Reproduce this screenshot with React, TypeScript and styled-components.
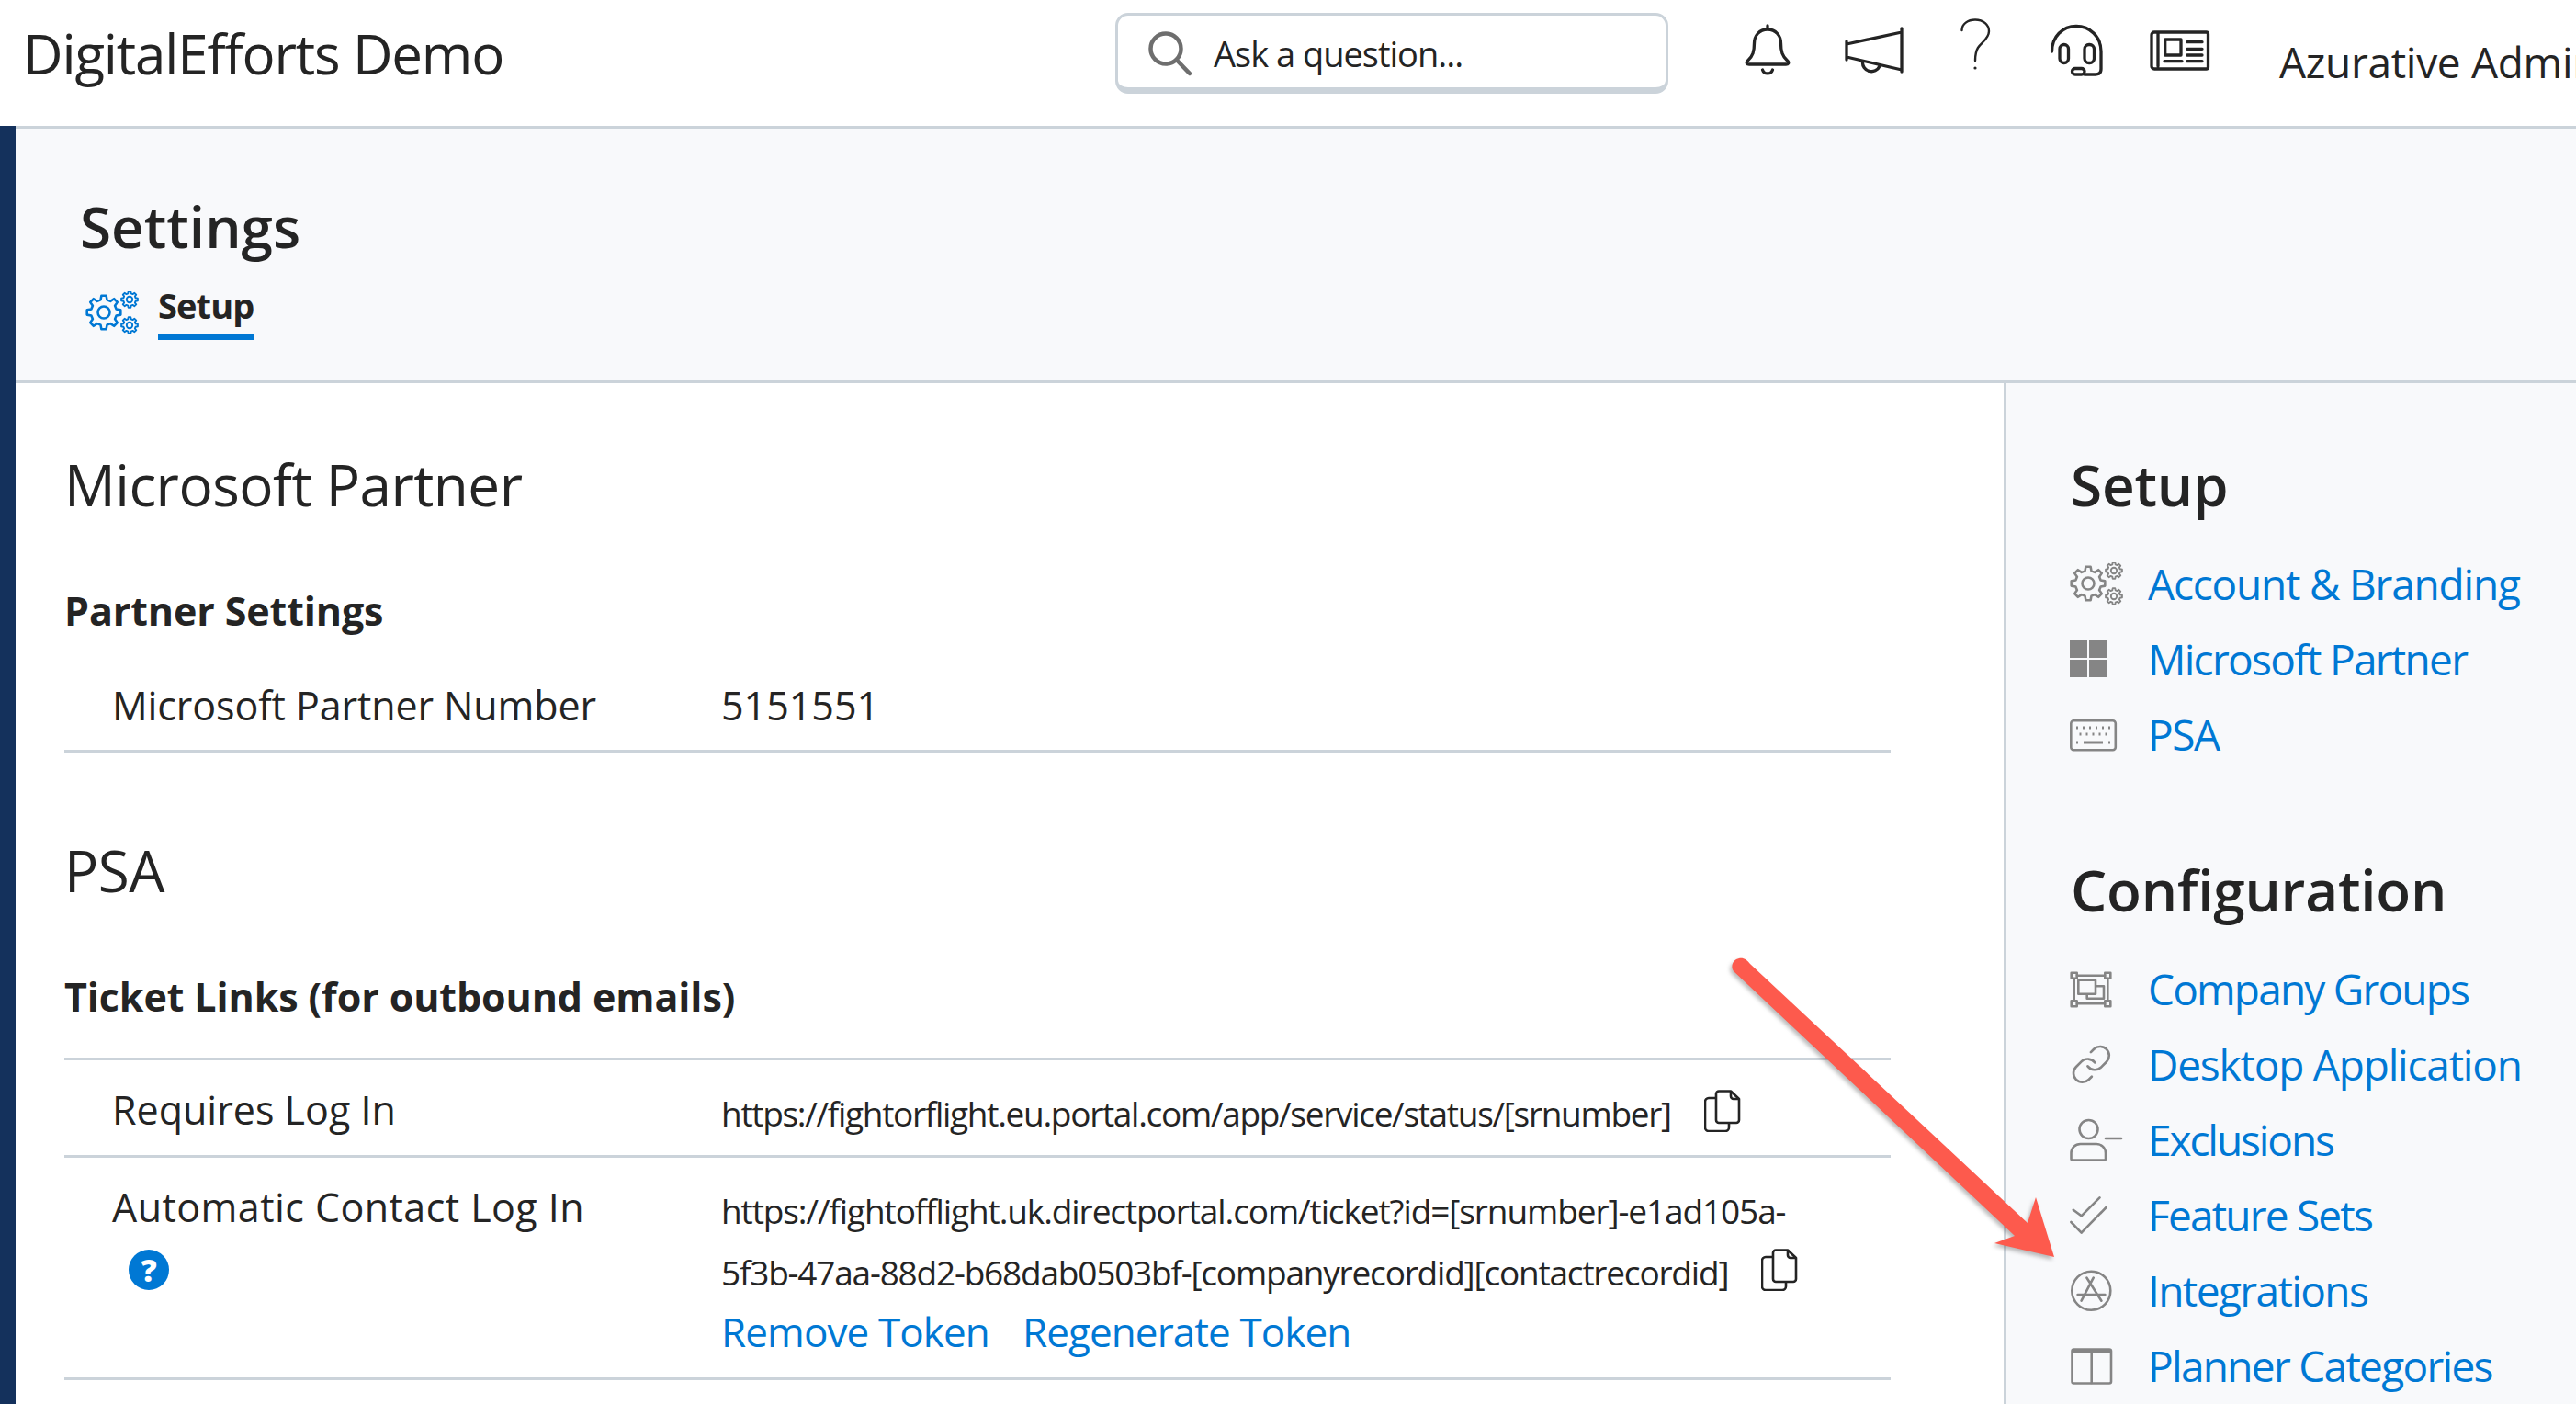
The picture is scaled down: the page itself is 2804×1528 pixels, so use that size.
import { createGlobalStyle, styled } from 'styled-components';

const INK = '#242424';
const BLUE = '#0078d4';
const RULE = '#cbd3da';
const ICON_GREY = '#858585';
const PANEL = '#f8f9fb';

const GlobalStyle = createGlobalStyle`
  html, body {
    margin: 0;
    padding: 0;
    background: #fff;
    overflow: hidden;
  }
  body {
    font-family: 'Open Sans', 'Noto Sans', sans-serif;
    color: ${INK};
  }
`;

// builds the outline of a cog, the settings icons use three of them
const gearPath = (cx: number, cy: number, r: number, teeth = 8) => {
  const inner = r * 0.76;
  const step = (Math.PI * 2) / teeth;
  const pts: string[] = [];
  for (let i = 0; i < teeth; i++) {
    const a = i * step;
    [
      [inner, a - step * 0.32],
      [r, a - step * 0.18],
      [r, a + step * 0.18],
      [inner, a + step * 0.32],
    ].forEach(([rad, ang]) => {
      pts.push(`${(cx + rad * Math.cos(ang)).toFixed(2)} ${(cy + rad * Math.sin(ang)).toFixed(2)}`);
    });
  }
  return `M${pts.join('L')}Z`;
};

const GearsIcon = ({ color }: { color: string }) => (
  <svg width="58" height="46" viewBox="0 0 58 46" fill="none" stroke={color} strokeWidth="2.6" strokeLinejoin="round">
    <path d={gearPath(20, 23, 18.5)} />
    <circle cx="20" cy="23" r="6.5" />
    <path d={gearPath(48, 9, 9)} strokeWidth="1.9" />
    <circle cx="48" cy="9" r="3.2" strokeWidth="1.9" />
    <path d={gearPath(48, 37, 9)} strokeWidth="1.9" />
    <circle cx="48" cy="37" r="3.2" strokeWidth="1.9" />
  </svg>
);

const HeaderSvg = ({ children }: { children: React.ReactNode }) => (
  <svg width="70" height="70" viewBox="0 0 70 70" fill="none" stroke={INK} strokeWidth="3.3" strokeLinecap="round" strokeLinejoin="round" overflow="visible">
    {children}
  </svg>
);

const BellIcon = () => (
  <HeaderSvg>
    <path d="M35 8v4M35 12C26 12 20.5 19 20.5 27C20.5 36 19 41 13.5 46C11 48.5 12.5 50 15 50H55C57.5 50 59 48.5 56.5 46C51 41 49.5 36 49.5 27C49.5 19 44 12 35 12Z" />
    <path d="M29.5 56a5.8 5.8 0 0 0 11 0" />
  </HeaderSvg>
);

const MegaphoneIcon = () => (
  <HeaderSvg>
    <path d="M9 25V45M69 11V58M9 28L69 15M9 42L69 56M26.5 47a9.7 9.7 0 0 0 18.5 5" />
  </HeaderSvg>
);

const QuestionIcon = () => (
  <HeaderSvg>
    <path d="M22.5 13C22.5 6 29 1.5 37 1.5C46 1.5 52 7 52 14C52 22 44 26 40 32C37.5 36 37 40 37 46" strokeWidth="2.4" />
    <circle cx="37" cy="54" r="1.6" fill={INK} stroke="none" />
  </HeaderSvg>
);

const HeadsetIcon = () => (
  <HeaderSvg>
    <path d="M8.5 36C8.5 20 20 8.5 35 8.5C50 8.5 62 20 62 36V55C62 59 60 61 56 61H44" />
    <rect x="17" y="28.5" width="9.5" height="20" rx="4.7" />
    <rect x="44" y="28.5" width="10.5" height="20" rx="5" />
    <rect x="30.5" y="54.5" width="13.5" height="6.5" rx="3.2" />
  </HeaderSvg>
);

const NewsIcon = () => (
  <HeaderSvg>
    <path d="M11 15H64.5a2 2 0 0 1 2 2V53a2 2 0 0 1-2 2H8a3 3 0 0 1-3-3V18a3 3 0 0 1 3-3H12V52" />
    <rect x="19.7" y="23" width="17.3" height="17" />
    <path d="M43.7 25.7H60M43.7 33.3H60M43.7 40H60M19 46.7H38M43.7 46.7H60" />
  </HeaderSvg>
);

const CopyIcon = () => (
  <CopySvg width="40" height="46" viewBox="0 0 40 46" fill="none" stroke={INK} strokeWidth="2.6" strokeLinejoin="round">
    <path d="M12.5 9H5a4 4 0 0 0-4 4V41a4 4 0 0 0 4 4H23a4 4 0 0 0 4-4V36.5" />
    <path d="M16 1.5H29L38 10V33a3 3 0 0 1-3 3H16a3 3 0 0 1-3-3V4.5a3 3 0 0 1 3-3Z" />
    <path d="M29 1.5V7a3 3 0 0 0 3 3H38" />
  </CopySvg>
);

const NavSvg = ({ children }: { children: React.ReactNode }) => (
  <svg width="58" height="46" viewBox="0 0 58 46" fill="none" stroke={ICON_GREY} strokeWidth="2.6" strokeLinecap="round" strokeLinejoin="round" overflow="visible">
    {children}
  </svg>
);

const WindowsIcon = () => (
  <NavSvg>
    <g fill={ICON_GREY} stroke="none">
      <rect x="0" y="3" width="19" height="19" />
      <rect x="21" y="3" width="19" height="19" />
      <rect x="0" y="24" width="19" height="19" />
      <rect x="21" y="24" width="19" height="19" />
    </g>
  </NavSvg>
);

const KeyboardIcon = () => (
  <NavSvg>
    <rect x="1.3" y="8.3" width="48.5" height="32" rx="3" />
    <path d="M7 16h2M14 16h2M21 16h2M28 16h2M35 16h2M42 16h2M10.5 23h2M17.5 23h2M24.5 23h2M31.5 23h2M38.5 23h2M7 32h2M15 32h21M42 32h2" strokeWidth="3" strokeLinecap="butt" />
  </NavSvg>
);

const GroupsIcon = () => (
  <NavSvg>
    <path d="M8 8.7H38M8 39.3H38M4.7 12V36M41.3 12V36" />
    <rect x="1.7" y="5.7" width="6" height="6" />
    <rect x="38.3" y="5.7" width="6" height="6" />
    <rect x="1.7" y="36.3" width="6" height="6" />
    <rect x="38.3" y="36.3" width="6" height="6" />
    <path d="M9.3 13.7H28V28.7H9.3ZM28 20.3H37V33.7H18.7V28.7" strokeLinecap="butt" />
  </NavSvg>
);

const LinkIcon = () => (
  <NavSvg>
    <g transform="scale(1.95)" strokeWidth="1.35">
      <path d="M10 13a5 5 0 0 0 7.54.54l3-3a5 5 0 0 0-7.07-7.07l-1.72 1.71" />
      <path d="M14 11a5 5 0 0 0-7.54-.54l-3 3a5 5 0 0 0 7.07 7.07l1.71-1.71" />
    </g>
  </NavSvg>
);

const PersonMinusIcon = () => (
  <NavSvg>
    <circle cx="20.5" cy="12" r="10" />
    <path d="M1.5 44V38A10 10 0 0 1 11.5 28H29A10 10 0 0 1 39 38V44A1.5 1.5 0 0 1 37.5 45.5H3A1.5 1.5 0 0 1 1.5 44Z" />
    <path d="M39 22H56" />
  </NavSvg>
);

const DoubleCheckIcon = () => (
  <NavSvg>
    <path d="M3.8 17.7L12.6 24.3L32.5 4.3M1.4 31L12.6 42.7L39.6 15" />
  </NavSvg>
);

const AppStoreIcon = () => (
  <NavSvg>
    <circle cx="23.3" cy="23.7" r="21" />
    <path d="M25.7 9.7L12.6 34.7M18.5 9.7L34.4 34.7M8.6 28H38.4" />
  </NavSvg>
);

const PlannerIcon = () => (
  <NavSvg>
    <rect x="2.5" y="5.5" width="42.5" height="37" rx="2" />
    <path d="M2.5 7.5H45" strokeWidth="4" strokeLinecap="butt" />
    <path d="M23.7 7V42" />
  </NavSvg>
);

const setupLinks = [
  { text: 'Account & Branding', spacing: -1.2, icon: <GearsIcon color={ICON_GREY} /> },
  { text: 'Microsoft Partner', spacing: -1.7, icon: <WindowsIcon /> },
  { text: 'PSA', spacing: -1.4, icon: <KeyboardIcon /> },
];

const configLinks = [
  { text: 'Company Groups', spacing: -1.8, icon: <GroupsIcon /> },
  { text: 'Desktop Application', spacing: -1.2, icon: <LinkIcon /> },
  { text: 'Exclusions', spacing: -2.1, icon: <PersonMinusIcon /> },
  { text: 'Feature Sets', spacing: -1.8, icon: <DoubleCheckIcon /> },
  { text: 'Integrations', spacing: -1.6, icon: <AppStoreIcon /> },
  { text: 'Planner Categories', spacing: -1.7, icon: <PlannerIcon /> },
];

const App = () => (
  <Page>
    <GlobalStyle />
    <Header>
      <Brand>DigitalEfforts Demo</Brand>
      <SearchBox>
        <svg width="50" height="50" viewBox="0 0 50 50" fill="none" stroke="#6e6e6e" strokeWidth="4.5" strokeLinecap="round">
          <circle cx="21" cy="20" r="16.5" />
          <path d="M33 32.5L47 47" />
        </svg>
        <SearchText>Ask a question...</SearchText>
      </SearchBox>
      <IconSlots>
        <BellIcon />
        <MegaphoneIcon />
        <QuestionIcon />
        <HeadsetIcon />
        <NewsIcon />
      </IconSlots>
      <UserName>Azurative Admin</UserName>
    </Header>
    <Body>
      <NavStrip />
      <Content>
        <PageHead>
          <PageTitle>Settings</PageTitle>
          <TabRow>
            <TabIcon>
              <GearsIcon color={BLUE} />
            </TabIcon>
            <TabLabel>Setup</TabLabel>
          </TabRow>
        </PageHead>
        <Columns>
          <MainColumn>
            <SectionTitle>Microsoft Partner</SectionTitle>
            <GroupTitle>Partner Settings</GroupTitle>
            <Row $first $paddingBottom={23}>
              <RowLabel $spacing={-0.1}>Microsoft Partner Number</RowLabel>
              <RowLabel>5151551</RowLabel>
            </Row>
            <SectionTitle $gap={93}>PSA</SectionTitle>
            <GroupTitle>Ticket Links (for outbound emails)</GroupTitle>
            <Table>
              <Row>
                <RowLabel>Requires Log In</RowLabel>
                <UrlValue>
                  <UrlLine $spacing={-1.3}>
                    https://fightorflight.eu.portal.com/app/service/status/[srnumber]
                  </UrlLine>
                  <CopyIcon />
                </UrlValue>
              </Row>
              <Row>
                <div>
                  <RowLabel $spacing={0.45}>Automatic Contact Log In</RowLabel>
                  <HelpBadge>?</HelpBadge>
                </div>
                <UrlValue>
                  <UrlLine $spacing={-1.1}>
                    https://fightofflight.uk.directportal.com/ticket?id=[srnumber]-e1ad105a-
                  </UrlLine>
                  <br />
                  <UrlLine $spacing={-1.2}>
                    5f3b-47aa-88d2-b68dab0503bf-[companyrecordid][contactrecordid]
                  </UrlLine>
                  <CopyIcon />
                  <TokenLinks>
                    <TokenLink>Remove Token</TokenLink>
                    <TokenLink>Regenerate Token</TokenLink>
                  </TokenLinks>
                </UrlValue>
              </Row>
            </Table>
          </MainColumn>
          <SideColumn>
            <SideTitle>Setup</SideTitle>
            <SideList>
              {setupLinks.map((item) => (
                <SideItem key={item.text}>
                  <SideIcon>{item.icon}</SideIcon>
                  <SideLink $spacing={item.spacing}>{item.text}</SideLink>
                </SideItem>
              ))}
            </SideList>
            <SideTitle $gap={91}>Configuration</SideTitle>
            <SideList>
              {configLinks.map((item) => (
                <SideItem key={item.text}>
                  <SideIcon>{item.icon}</SideIcon>
                  <SideLink $spacing={item.spacing}>{item.text}</SideLink>
                </SideItem>
              ))}
            </SideList>
          </SideColumn>
        </Columns>
      </Content>
    </Body>
    <ArrowOverlay width="2804" height="1528" viewBox="0 0 2804 1528">
      <path
        d="M1887 1057C1883 1051 1887 1044 1893 1043C1898 1042 1902 1045 1905 1049L2207 1331L2216 1303L2236 1368L2171 1353L2193 1345L1887 1057Z"
        fill="#fd5a4d"
      />
    </ArrowOverlay>
  </Page>
);

const Page = styled.div`
  position: relative;
  width: 2804px;
  height: 1528px;
  overflow: hidden;
  background: #fff;
`;

const Header = styled.header`
  display: flex;
  align-items: flex-start;
  height: 137px;
  box-sizing: border-box;
  white-space: nowrap;
`;

const Brand = styled.div`
  flex: 0 0 1214px;
  box-sizing: border-box;
  padding: 23px 0 0 25px;
  font-size: 60px;
  line-height: 70px;
  letter-spacing: -1.15px;
`;

const SearchBox = styled.div`
  flex: 0 0 602px;
  box-sizing: border-box;
  height: 88px;
  margin-top: 14px;
  padding: 3px 0 0 31px;
  display: flex;
  align-items: center;
  gap: 23px;
  background: #fff;
  border: 3px solid ${RULE};
  border-bottom-width: 7px;
  border-radius: 14px;
`;

const SearchText = styled.span`
  font-size: 38px;
  line-height: 50px;
  letter-spacing: -1px;
`;

const IconSlots = styled.div`
  display: flex;
  gap: 42px;
  margin: 20px 0 0 73px;
`;

const UserName = styled.div`
  margin: 37px 0 0 74px;
  font-size: 46px;
  line-height: 60px;
  letter-spacing: -0.3px;
`;

const Body = styled.div`
  display: flex;
`;

const NavStrip = styled.div`
  flex: 0 0 17px;
  height: 1391px;
  background: #14315c;
`;

const Content = styled.div`
  flex: 1;
  min-width: 0;
`;

const PageHead = styled.section`
  box-sizing: border-box;
  height: 280px;
  padding: 69px 0 0 70px;
  background: ${PANEL};
  border-top: 3px solid ${RULE};
  border-bottom: 3px solid ${RULE};
`;

const PageTitle = styled.h1`
  margin: 0;
  font-size: 62px;
  line-height: 74px;
  font-weight: 600;
`;

const TabRow = styled.div`
  display: flex;
  gap: 21px;
  margin-top: 26px;
`;

const TabIcon = styled.div`
  margin: 8px 0 0 6px;
  height: 46px;
`;

const TabLabel = styled.div`
  padding-bottom: 8px;
  font-size: 38px;
  line-height: 46px;
  font-weight: 700;
  letter-spacing: -0.9px;
  border-bottom: 7px solid ${BLUE};
`;

const Columns = styled.div`
  display: flex;
`;

const MainColumn = styled.main`
  flex: 0 0 2164px;
  box-sizing: border-box;
  padding: 0 123px 0 53px;
`;

const SectionTitle = styled.h2<{ $gap?: number }>`
  margin: ${(p) => p.$gap ?? 75}px 0 78px;
  font-size: 62px;
  line-height: 70px;
  font-weight: 400;
  letter-spacing: -0.5px;
`;

const GroupTitle = styled.h3`
  margin: 0;
  font-size: 43px;
  line-height: 50px;
  font-weight: 700;
  letter-spacing: -0.1px;
`;

const Table = styled.div`
  margin-top: 41px;
  border-top: 3px solid ${RULE};
`;

const Row = styled.div<{ $first?: boolean; $paddingBottom?: number }>`
  display: grid;
  grid-template-columns: 663px 1fr;
  margin-top: ${(p) => (p.$first ? 24 : 0)}px;
  padding: 29px 0 ${(p) => p.$paddingBottom ?? 12}px 52px;
  border-bottom: 3px solid ${RULE};
`;

const RowLabel = styled.div<{ $spacing?: number }>`
  font-size: 43px;
  line-height: 50px;
  letter-spacing: ${(p) => p.$spacing ?? 0}px;
  white-space: nowrap;
`;

const HelpBadge = styled.span`
  display: flex;
  align-items: center;
  justify-content: center;
  width: 44px;
  height: 44px;
  margin: 21px 0 0 18px;
  border-radius: 50%;
  background: ${BLUE};
  color: #fff;
  font-size: 34px;
  line-height: 44px;
  font-weight: 800;
`;

const UrlValue = styled.div`
  margin-top: -5px;
  font-size: 37px;
  line-height: 67px;
  white-space: nowrap;
`;

const UrlLine = styled.span<{ $spacing: number }>`
  letter-spacing: ${(p) => p.$spacing}px;
`;

const CopySvg = styled.svg`
  margin-left: 36px;
  vertical-align: -6px;
`;

const TokenLinks = styled.div`
  display: flex;
  gap: 36px;
  margin: -2px 0 5px;
  line-height: 66px;
`;

const TokenLink = styled.a`
  color: ${BLUE};
  font-size: 44px;
  letter-spacing: -0.9px;
`;

const SideColumn = styled.aside`
  flex: 1;
  min-width: 0;
  height: 1111px;
  box-sizing: border-box;
  padding: 73px 0 0 69px;
  background: ${PANEL};
  border-left: 3px solid ${RULE};
  white-space: nowrap;
`;

const SideTitle = styled.h2<{ $gap?: number }>`
  margin: ${(p) => p.$gap ?? 0}px 0 30px 1px;
  font-size: 62px;
  line-height: 74px;
  font-weight: 600;
  letter-spacing: -0.2px;
`;

const SideList = styled.div`
  display: flex;
  flex-direction: column;
`;

const SideItem = styled.div`
  display: flex;
  align-items: center;
  height: 82px;
`;

const SideIcon = styled.span`
  flex: 0 0 85px;
  display: flex;
`;

const SideLink = styled.a<{ $spacing: number }>`
  color: ${BLUE};
  font-size: 46px;
  line-height: 82px;
  letter-spacing: ${(p) => p.$spacing}px;
`;

const ArrowOverlay = styled.svg`
  position: absolute;
  top: 0;
  left: 0;
  pointer-events: none;
  filter: drop-shadow(-2px 3px 2px rgba(60, 60, 60, 0.35));
`;

export default App;
